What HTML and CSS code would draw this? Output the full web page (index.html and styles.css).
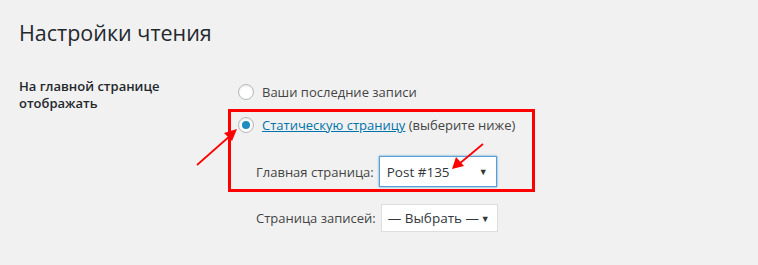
FILE: index.html
```html
<!DOCTYPE html>
<html lang="ru">
<head>
<meta charset="utf-8">
<title>Настройки чтения</title>
<link rel="stylesheet" href="styles.css">
</head>
<body>
<div class="wrap">
  <h1 class="title">Настройки чтения</h1>
  <div class="row">
    <div class="th">На главной странице<br>отображать</div>
    <div class="td">
      <label class="radio"><span class="rb"></span><span>Ваши последние записи</span></label>
      <div class="highlight">
        <label class="radio"><span class="rb checked"></span><span><a class="link" href="#">Статическую страницу</a> (выберите ниже)</span></label>
        <div class="selrow">
          <span class="sel-label">Главная страница:</span>
          <div class="select focus"><span>Post #135</span><span class="caret">▼</span></div>
        </div>
      </div>
      <div class="selrow second">
        <span class="sel-label">Страница записей:</span>
        <div class="select small"><span>— Выбрать —</span><span class="caret">▼</span></div>
      </div>
    </div>
  </div>
  <svg class="annot" width="758" height="265" viewBox="0 0 758 265" aria-hidden="true">
    <line x1="197" y1="165" x2="231" y2="135" stroke="#f00" stroke-width="1.7"/>
    <polygon points="237,129 224,133 232,141" fill="#f00"/>
    <line x1="483" y1="144" x2="459" y2="164" stroke="#f00" stroke-width="1.7"/>
    <polygon points="452,169 456,157 464,166" fill="#f00"/>
  </svg>
</div>
</body>
</html>
```
FILE: styles.css
```css
html, body {
  margin: 0;
  padding: 0;
  background: #f1f1f1;
}
body {
  font-family: "Open Sans", "Noto Sans", sans-serif;
  font-size: 13px;
  color: #444;
}
.wrap {
  position: relative;
  width: 758px;
  height: 265px;
  padding: 18px 0 0 19px;
  box-sizing: border-box;
}
.title {
  margin: 0;
  font-size: 21.5px;
  font-weight: 400;
  line-height: 30px;
  color: #23282d;
}
.row {
  display: flex;
  margin-top: 30px;
}
.th {
  width: 219px;
  flex: none;
  font-weight: 600;
  font-size: 13px;
  line-height: 17px;
  color: #23282d;
}
.td {
  display: flex;
  flex-direction: column;
  padding-top: 5px;
}
.radio {
  display: flex;
  align-items: center;
  gap: 8px;
  height: 18px;
  line-height: 18px;
}
.rb {
  width: 14px;
  height: 14px;
  border: 1px solid #b4b9be;
  border-radius: 50%;
  background: #fff;
  box-shadow: inset 0 1px 2px rgba(0,0,0,0.1);
  display: flex;
  align-items: center;
  justify-content: center;
  flex: none;
}
.rb.checked::before {
  content: "";
  width: 8px;
  height: 8px;
  border-radius: 50%;
  background: #1e8cbe;
}
.link {
  color: #0073aa;
  text-decoration: underline;
}
.highlight {
  box-sizing: border-box;
  margin: 8px 0 0 -10px;
  width: 307px;
  border: 3px solid #f00;
  padding: 4px 0 2px 7px;
}
.selrow {
  display: flex;
  align-items: center;
  gap: 5px;
  padding-left: 18px;
  white-space: nowrap;
}
.highlight .selrow {
  margin-top: 22px;
}
.selrow.second {
  margin-top: 12px;
}
.sel-label {
  color: #444;
}
.select {
  box-sizing: border-box;
  height: 31px;
  width: 118px;
  background: #fff;
  border: 1px solid #ddd;
  color: #32373c;
  display: flex;
  align-items: center;
  justify-content: space-between;
  padding: 0 8px 0 7px;
  font-size: 13.5px;
  white-space: nowrap;
}
.select.focus {
  border-color: #5b9dd9;
  box-shadow: 0 0 2px rgba(30,140,190,0.8);
}
.select.small {
  height: 28px;
  width: 117px;
  padding: 0 7px 0 6px;
}
.caret {
  font-size: 9px;
  color: #32373c;
}
.annot {
  position: absolute;
  left: 0;
  top: 0;
  pointer-events: none;
}
```
